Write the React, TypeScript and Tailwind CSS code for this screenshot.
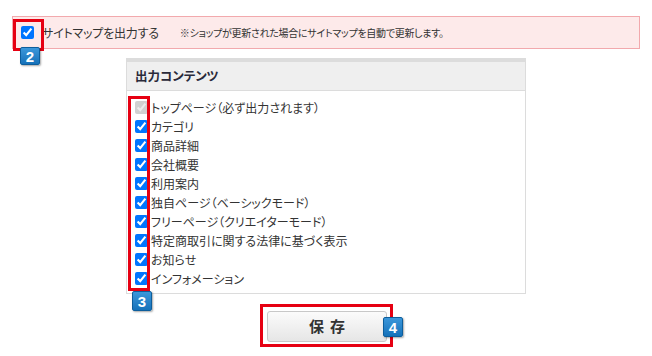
import React from "react";

const items = [
  "トップページ（必ず出力されます）",
  "カテゴリ",
  "商品詳細",
  "会社概要",
  "利用案内",
  "独自ページ（ベーシックモード）",
  "フリーページ（クリエイターモード）",
  "特定商取引に関する法律に基づく表示",
  "お知らせ",
  "インフォメーション",
];

const Badge: React.FC<{ n: string; className: string }> = ({ n, className }) => (
  <div
    className={`absolute flex items-center justify-center rounded-[2px] border border-[#0d5e9c] bg-gradient-to-b from-[#3b97da] to-[#1572ba] text-white font-bold text-[15px] leading-none shadow-[1px_1px_2px_rgba(0,0,0,0.35)] [font-family:'Liberation_Sans',Arial,sans-serif] ${className}`}
  >
    {n}
  </div>
);

const App: React.FC = () => {
  return (
    <div className="w-[652px] h-[356px] bg-white text-[#333] [font-family:'Noto_Sans_CJK_JP',sans-serif] [font-feature-settings:'palt'] overflow-hidden">
      {/* sitemap toggle */}
      <div className="relative mx-[12px] mt-[16px] h-[33px] border border-[#f2a9ad] bg-[#fdeaea] flex items-center">
        <input type="checkbox" defaultChecked className="ml-[8px] m-0 w-[13px] h-[13px]" />
        <span className="ml-[8px] text-[12px] tracking-[-0.2px]">サイトマップを出力する</span>
        <span className="ml-[21px] text-[10px] tracking-[-0.3px]">※ショップが更新された場合にサイトマップを自動で更新します。</span>
        <div className="absolute left-0 top-[2px] w-[31px] h-[32px] border-[3px] border-[#e60012]" />
        <Badge n="2" className="left-[7px] top-[30px] w-[20px] h-[18px]" />
      </div>

      {/* contents panel */}
      <div className="relative mx-auto mt-[9px] w-[400px] border border-[#dcdcdc] border-t-[4px]">
        <div className="h-[29px] bg-[#efefef] border-b border-[#dcdcdc] flex items-center pl-[8px] text-[12.5px] font-bold text-[#2a2a3a]">
          出力コンテンツ
        </div>
        <div className="pt-[7px] pb-[5px]">
          {items.map((label, i) => (
            <div key={label} className="h-[19px] flex items-center pl-[8px] text-[12px]">
              <input
                type="checkbox"
                defaultChecked
                disabled={i === 0}
                className="m-0 w-[13px] h-[13px]"
              />
              <span className="ml-[3px]">{label}</span>
            </div>
          ))}
        </div>
        <div className="absolute left-[1px] top-[34px] w-[22px] h-[195px] border-[3px] border-[#e60012]" />
        <Badge n="3" className="left-[5px] top-[229px] w-[20px] h-[20px]" />
      </div>

      {/* save */}
      <div className="flex justify-center mt-[17px]">
        <div className="relative ml-[2px]">
          <button className="w-[120px] h-[31px] rounded-[3px] border border-[#c8c8c8] bg-gradient-to-b from-[#fbfbfb] to-[#e6e6e6] text-[15px] font-bold text-[#333] tracking-[6px] pl-[6px]">
            保存
          </button>
          <div className="absolute left-[-7px] top-[-7px] w-[133px] h-[43px] border-[3px] border-[#e60012]" />
          <Badge n="4" className="left-[116px] top-[6px] w-[20px] h-[20px]" />
        </div>
      </div>
    </div>
  );
};

export default App;
